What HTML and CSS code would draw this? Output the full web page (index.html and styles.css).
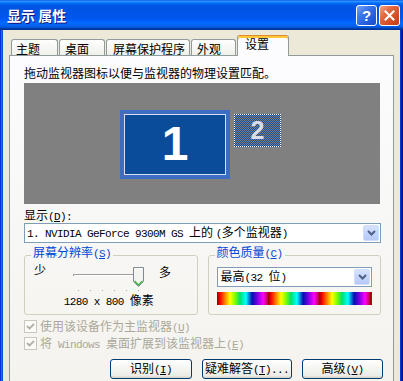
FILE: index.html
```html
<!DOCTYPE html>
<html lang="zh-CN">
<head>
<meta charset="utf-8">
<title>显示 属性</title>
<link rel="stylesheet" href="styles.css">
</head>
<body>
<div class="window">
  <div class="titlebar">
    <span class="title">显示 属性</span>
    <div class="tbtns">
      <span class="tb help">?</span>
      <span class="tb close"><svg width="11" height="11" viewBox="0 0 11 11"><path d="M1.5 1.5 L9.5 9.5 M9.5 1.5 L1.5 9.5" stroke="#fff" stroke-width="2" stroke-linecap="square"/></svg></span>
    </div>
  </div>
  <div class="frame">
    <div class="tabs">
      <div class="tab w1">主题</div>
      <div class="tab w2">桌面</div>
      <div class="tab w3">屏幕保护程序</div>
      <div class="tab w4">外观</div>
      <div class="tab sel">设置</div>
    </div>
    <div class="panel">
      <div class="hint">拖动监视器图标以便与监视器的物理设置匹配。</div>
      <div class="canvas">
        <div class="mon1"><div class="mon1-in">1</div></div>
        <div class="mon2">2</div>
      </div>
      <div class="lbl">显示<span class="lat">(<u>D</u>):</span></div>
      <div class="select">
        <span class="seltext"><span class="lat">1. NVIDIA GeForce 9300M GS </span>上的 <span class="lat">(</span>多个监视器<span class="lat">)</span></span>
        <span class="dd"><svg width="9" height="6" viewBox="0 0 9 6"><path d="M1 1 L4.5 4.5 L8 1" fill="none" stroke="#4d6185" stroke-width="2"/></svg></span>
      </div>
      <div class="groups">
        <fieldset class="grp">
          <legend>屏幕分辨率<span class="lat">(<u>S</u>)</span></legend>
          <div class="sliderrow">
            <span class="few">少</span>
            <svg class="slider" width="76" height="28" viewBox="0 0 76 28">
              <rect x="2" y="11" width="63" height="1" fill="#9d9c99"/>
              <rect x="2" y="12" width="63" height="1" fill="#ffffff"/>
              <rect x="2" y="11" width="1" height="2" fill="#9d9c99"/>
              <g fill="#a8a8a0">
                <rect x="7" y="27" width="1" height="1"/>
                <rect x="19" y="27" width="1" height="1"/>
                <rect x="31" y="27" width="1" height="1"/>
                <rect x="43" y="27" width="1" height="1"/>
                <rect x="55" y="27" width="1" height="1"/>
                <rect x="67" y="27" width="1" height="1"/>
              </g>
              <path d="M62.5 4.5 H72.5 V18.5 L67.5 23.5 L62.5 18.5 Z" fill="#f4f4f0" stroke="#7d8a96"/>
              <path d="M63.5 18 L67.5 22 L71.5 18" fill="none" stroke="#3fb33f" stroke-width="1.4"/>
              <path d="M63.5 5.5 H71.5" stroke="#ffffff"/>
            </svg>
            <span class="many">多</span>
          </div>
          <div class="res"><span class="lat">1280 x 800 </span>像素</div>
        </fieldset>
        <fieldset class="grp">
          <legend>颜色质量<span class="lat">(<u>C</u>)</span></legend>
          <div class="select small">
            <span class="seltext">最高<span class="lat">(32 </span>位<span class="lat">)</span></span>
            <span class="dd"><svg width="9" height="6" viewBox="0 0 9 6"><path d="M1 1 L4.5 4.5 L8 1" fill="none" stroke="#4d6185" stroke-width="2"/></svg></span>
          </div>
          <div class="rainbow"></div>
        </fieldset>
      </div>
      <div class="chk"><span class="box"><svg width="11" height="11" viewBox="0 0 11 11"><path d="M2 5 L4.5 7.5 L9 3" fill="none" stroke="#b2b0a4" stroke-width="1.8"/></svg></span><span>使用该设备作为主监视器<span class="lat">(<u>U</u>)</span></span></div>
      <div class="chk"><span class="box"><svg width="11" height="11" viewBox="0 0 11 11"><path d="M2 5 L4.5 7.5 L9 3" fill="none" stroke="#b2b0a4" stroke-width="1.8"/></svg></span><span>将<span class="lat"> Windows </span>桌面扩展到该监视器上<span class="lat">(<u>E</u>)</span></span></div>
      <div class="btns">
        <button class="btn b1">识别<span class="lat">(<u>I</u>)</span></button>
        <button class="btn b2">疑难解答<span class="lat">(<u>T</u>)...</span></button>
        <button class="btn b3">高级<span class="lat">(<u>V</u>)</span></button>
      </div>
    </div>
  </div>
</div>
</body>
</html>
```

FILE: styles.css
```css
* { box-sizing: border-box; }
html, body { margin: 0; padding: 0; }
body {
  width: 403px;
  height: 381px;
  overflow: hidden;
  background: #ece9d8;
  font-family: "Noto Sans CJK SC", "Noto Sans", sans-serif;
  font-size: 12px;
  line-height: 14px;
  color: #000;
}
.lat {
  font-family: "Liberation Mono", monospace;
  font-size: 11px;
  letter-spacing: -0.6px;
}
.window {
  width: 403px;
  height: 381px;
  display: flex;
  flex-direction: column;
  background: #ece9d8;
}
.titlebar {
  height: 30px;
  flex: none;
  display: flex;
  justify-content: space-between;
  align-items: center;
  padding: 0 3px 0 7px;
  background: linear-gradient(180deg, #0058ee 0%, #3593ff 4%, #288eff 6%, #127dff 8%, #036ffc 10%, #0262ee 14%, #0057e5 20%, #0054e3 24%, #0055eb 56%, #005bf5 66%, #026afe 76%, #0062ef 86%, #0052d6 92%, #0040ab 94%, #003092 100%);
}
.title {
  color: #fff;
  font-weight: bold;
  font-size: 14px;
  line-height: 16px;
  text-shadow: 1px 1px #0f1089;
}
.tbtns {
  display: flex;
  gap: 2px;
  align-self: flex-start;
  margin-top: 5px;
}
.tb {
  width: 21px;
  height: 21px;
  border: 1px solid #fff;
  border-radius: 3px;
  display: flex;
  align-items: center;
  justify-content: center;
}
.help {
  background: linear-gradient(135deg, #7aa4f6 0%, #3c76ea 35%, #2159dc 75%, #1b4cc8 100%);
  color: #fff;
  font-family: "Liberation Sans", sans-serif;
  font-weight: bold;
  font-size: 15px;
  line-height: 15px;
}
.close {
  background: linear-gradient(135deg, #f2a486 0%, #e5673f 35%, #d4481f 75%, #c23c16 100%);
}
.frame {
  flex: 1;
  display: flex;
  flex-direction: column;
  padding: 5px 9px 0 9px;
  box-shadow: inset 1px 0 #0831d9, inset 2px 0 #166aee, inset 3px 0 #0855dd,
              inset -1px 0 #00138c, inset -2px 0 #001ea0, inset -3px 0 #003bda;
}
.tabs {
  display: flex;
  align-items: flex-end;
  gap: 1px;
  height: 21px;
  padding-left: 2px;
  margin-bottom: -1px;
}
.tab {
  height: 17px;
  border: 1px solid #919b9c;
  border-bottom: none;
  border-radius: 3px 3px 0 0;
  background: linear-gradient(180deg, #fff 0%, #fafaf9 26%, #f0f0ea 95%, #ecebe6 100%);
  padding: 2px 0 0 4px;
  white-space: nowrap;
}
.w1 { width: 47px; }
.w2 { width: 46px; padding-left: 5px; }
.w3 { width: 84px; padding-left: 6px; }
.w4 { width: 45px; padding-left: 5px; }
.sel {
  width: 52px;
  height: 21px;
  position: relative;
  z-index: 1;
  background: #fcfcfe;
  border-top: 1px solid #e68b2c;
  box-shadow: inset 0 2px #ffc83c;
  padding: 1px 0 0 7px;
}
.panel {
  flex: 1;
  display: flex;
  flex-direction: column;
  border: 1px solid #919b9c;
  border-bottom: none;
  background: linear-gradient(180deg, #fcfcfe 0%, #f4f3ee 100%);
  padding: 10px 12px 0 14px;
}
.hint { height: 14px; }
.canvas {
  position: relative;
  height: 121px;
  margin: 3px 1px 0 0;
  background: #808080;
}
.mon1 {
  position: absolute;
  left: 96px;
  top: 27px;
  width: 110px;
  height: 69px;
  padding: 4px;
  background: #3d6dc3;
}
.mon1-in {
  height: 100%;
  border: 1px solid #d6e1f5;
  background: #0b4c99;
  color: #fff;
  font-family: "Liberation Sans", sans-serif;
  font-weight: bold;
  font-size: 48px;
  line-height: 58px;
  text-align: center;
}
.mon2 {
  position: absolute;
  left: 210px;
  top: 31px;
  width: 47px;
  height: 33px;
  border: 1px dotted #fff;
  background: repeating-conic-gradient(#1d4f92 0 25%, #787d86 0 50%) 0 0 / 2px 2px;
  color: #d9dee6;
  font-family: "Liberation Sans", sans-serif;
  font-weight: bold;
  font-size: 25px;
  line-height: 31px;
  text-align: center;
}
.lbl { margin-top: 4px; height: 14px; }
.select {
  margin-top: 1px;
  height: 20px;
  border: 1px solid #7f9db9;
  background: #fff;
  display: flex;
  align-items: center;
  padding-left: 2px;
}
.seltext { white-space: nowrap; }
.dd {
  margin-left: auto;
  margin-right: 1px;
  width: 16px;
  height: 16px;
  border: 1px solid #d2ddfb;
  border-radius: 2px;
  background: linear-gradient(180deg, #d7e3fd 0%, #c4d4fb 50%, #b7caf7 100%);
  display: flex;
  align-items: center;
  justify-content: center;
}
.groups {
  display: flex;
  gap: 10px;
  margin-top: 2px;
}
.grp {
  flex: 1;
  min-width: 0;
  margin: 0;
  border: 1px solid #d0d0bf;
  border-radius: 3px;
  padding: 0 8px 7px 8px;
}
.grp legend {
  padding: 0 2px 4px 2px;
  margin-left: -2px;
  line-height: 14px;
  color: #0046d5;
}
.sliderrow {
  display: flex;
  align-items: flex-start;
  height: 28px;
  margin-top: -2px;
}
.few { margin-left: 1px; }
.slider { margin-left: 25px; display: block; }
.many { margin-left: 12px; margin-top: 2px; }
.res {
  margin-top: 2px;
  height: 14px;
  text-align: center;
  padding-right: 4px;
}
.small { margin-top: 2px; padding-left: 3px; }
.rainbow {
  margin-top: 5px;
  height: 13px;
  background: repeating-linear-gradient(90deg,
    #8a0000 0px, #ff0000 3px, #ff8000 8px, #ffff00 13px, #80ff00 18px,
    #00e070 23px, #00ffff 29px, #0010b0 35px, #7000e0 40px, #ff00ff 46px, #c00040 51px);
}
.chk {
  display: flex;
  align-items: center;
  gap: 3px;
  height: 17px;
  color: #aca899;
}
.chk:first-of-type { margin-top: 3px; }
.groups + .chk { margin-top: 3px; }
.box {
  width: 13px;
  height: 13px;
  border: 1px solid #cac8bb;
  background: #fbfbf8;
  display: flex;
  align-items: center;
  justify-content: center;
}
.btns {
  display: flex;
  justify-content: flex-end;
  gap: 10px;
  margin-top: 7px;
  margin-right: -2px;
}
.btn {
  height: 20px;
  border: 1px solid #003c74;
  border-radius: 3px;
  background: linear-gradient(180deg, #fff 0%, #f4f4f0 50%, #ecebe6 86%, #d6d0c5 100%);
  font-family: "Noto Sans CJK SC", sans-serif;
  font-size: 12px;
  line-height: 16px;
  color: #000;
  padding: 0;
  text-align: center;
}
.b1 { width: 82px; }
.b2 { width: 90px; }
.b3 { width: 81px; }
```
